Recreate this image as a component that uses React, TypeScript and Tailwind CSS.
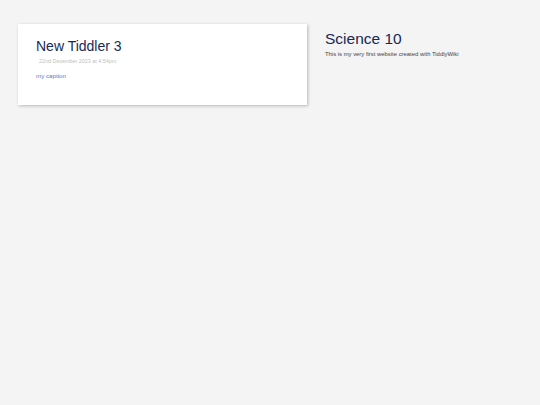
export default function App() {
  return (
    <div
      className="min-h-[405px] w-full bg-[#f4f4f4] flex items-start pt-[24px] pl-[18px] gap-[18px]"
      style={{ fontFamily: '"Liberation Sans", Arial, sans-serif' }}
    >
      <div className="w-[289px] h-[81px] bg-white shadow-[1px_1px_3px_rgba(0,0,0,0.25)] pt-[14px] px-[18px] flex flex-col">
        <div className="text-[14px] leading-[17px] text-[#182955]">New Tiddler 3</div>
        <div className="mt-[2.5px] ml-[3px] text-[5.4px] leading-[7px] text-[#c0c0c0]">22nd December 2023 at 4:54pm</div>
        <div className="mt-[7px] text-[6.2px] leading-[8px] text-[#5778d8]">my caption</div>
      </div>
      <div className="pt-[6px] flex flex-col">
        <div className="text-[15.5px] leading-[18px] text-[#182955]">Science 10</div>
        <div className="mt-[2.5px] text-[5.9px] leading-[7px] text-[#444444]">This is my very first website created with TiddlyWiki</div>
      </div>
    </div>
  );
}
